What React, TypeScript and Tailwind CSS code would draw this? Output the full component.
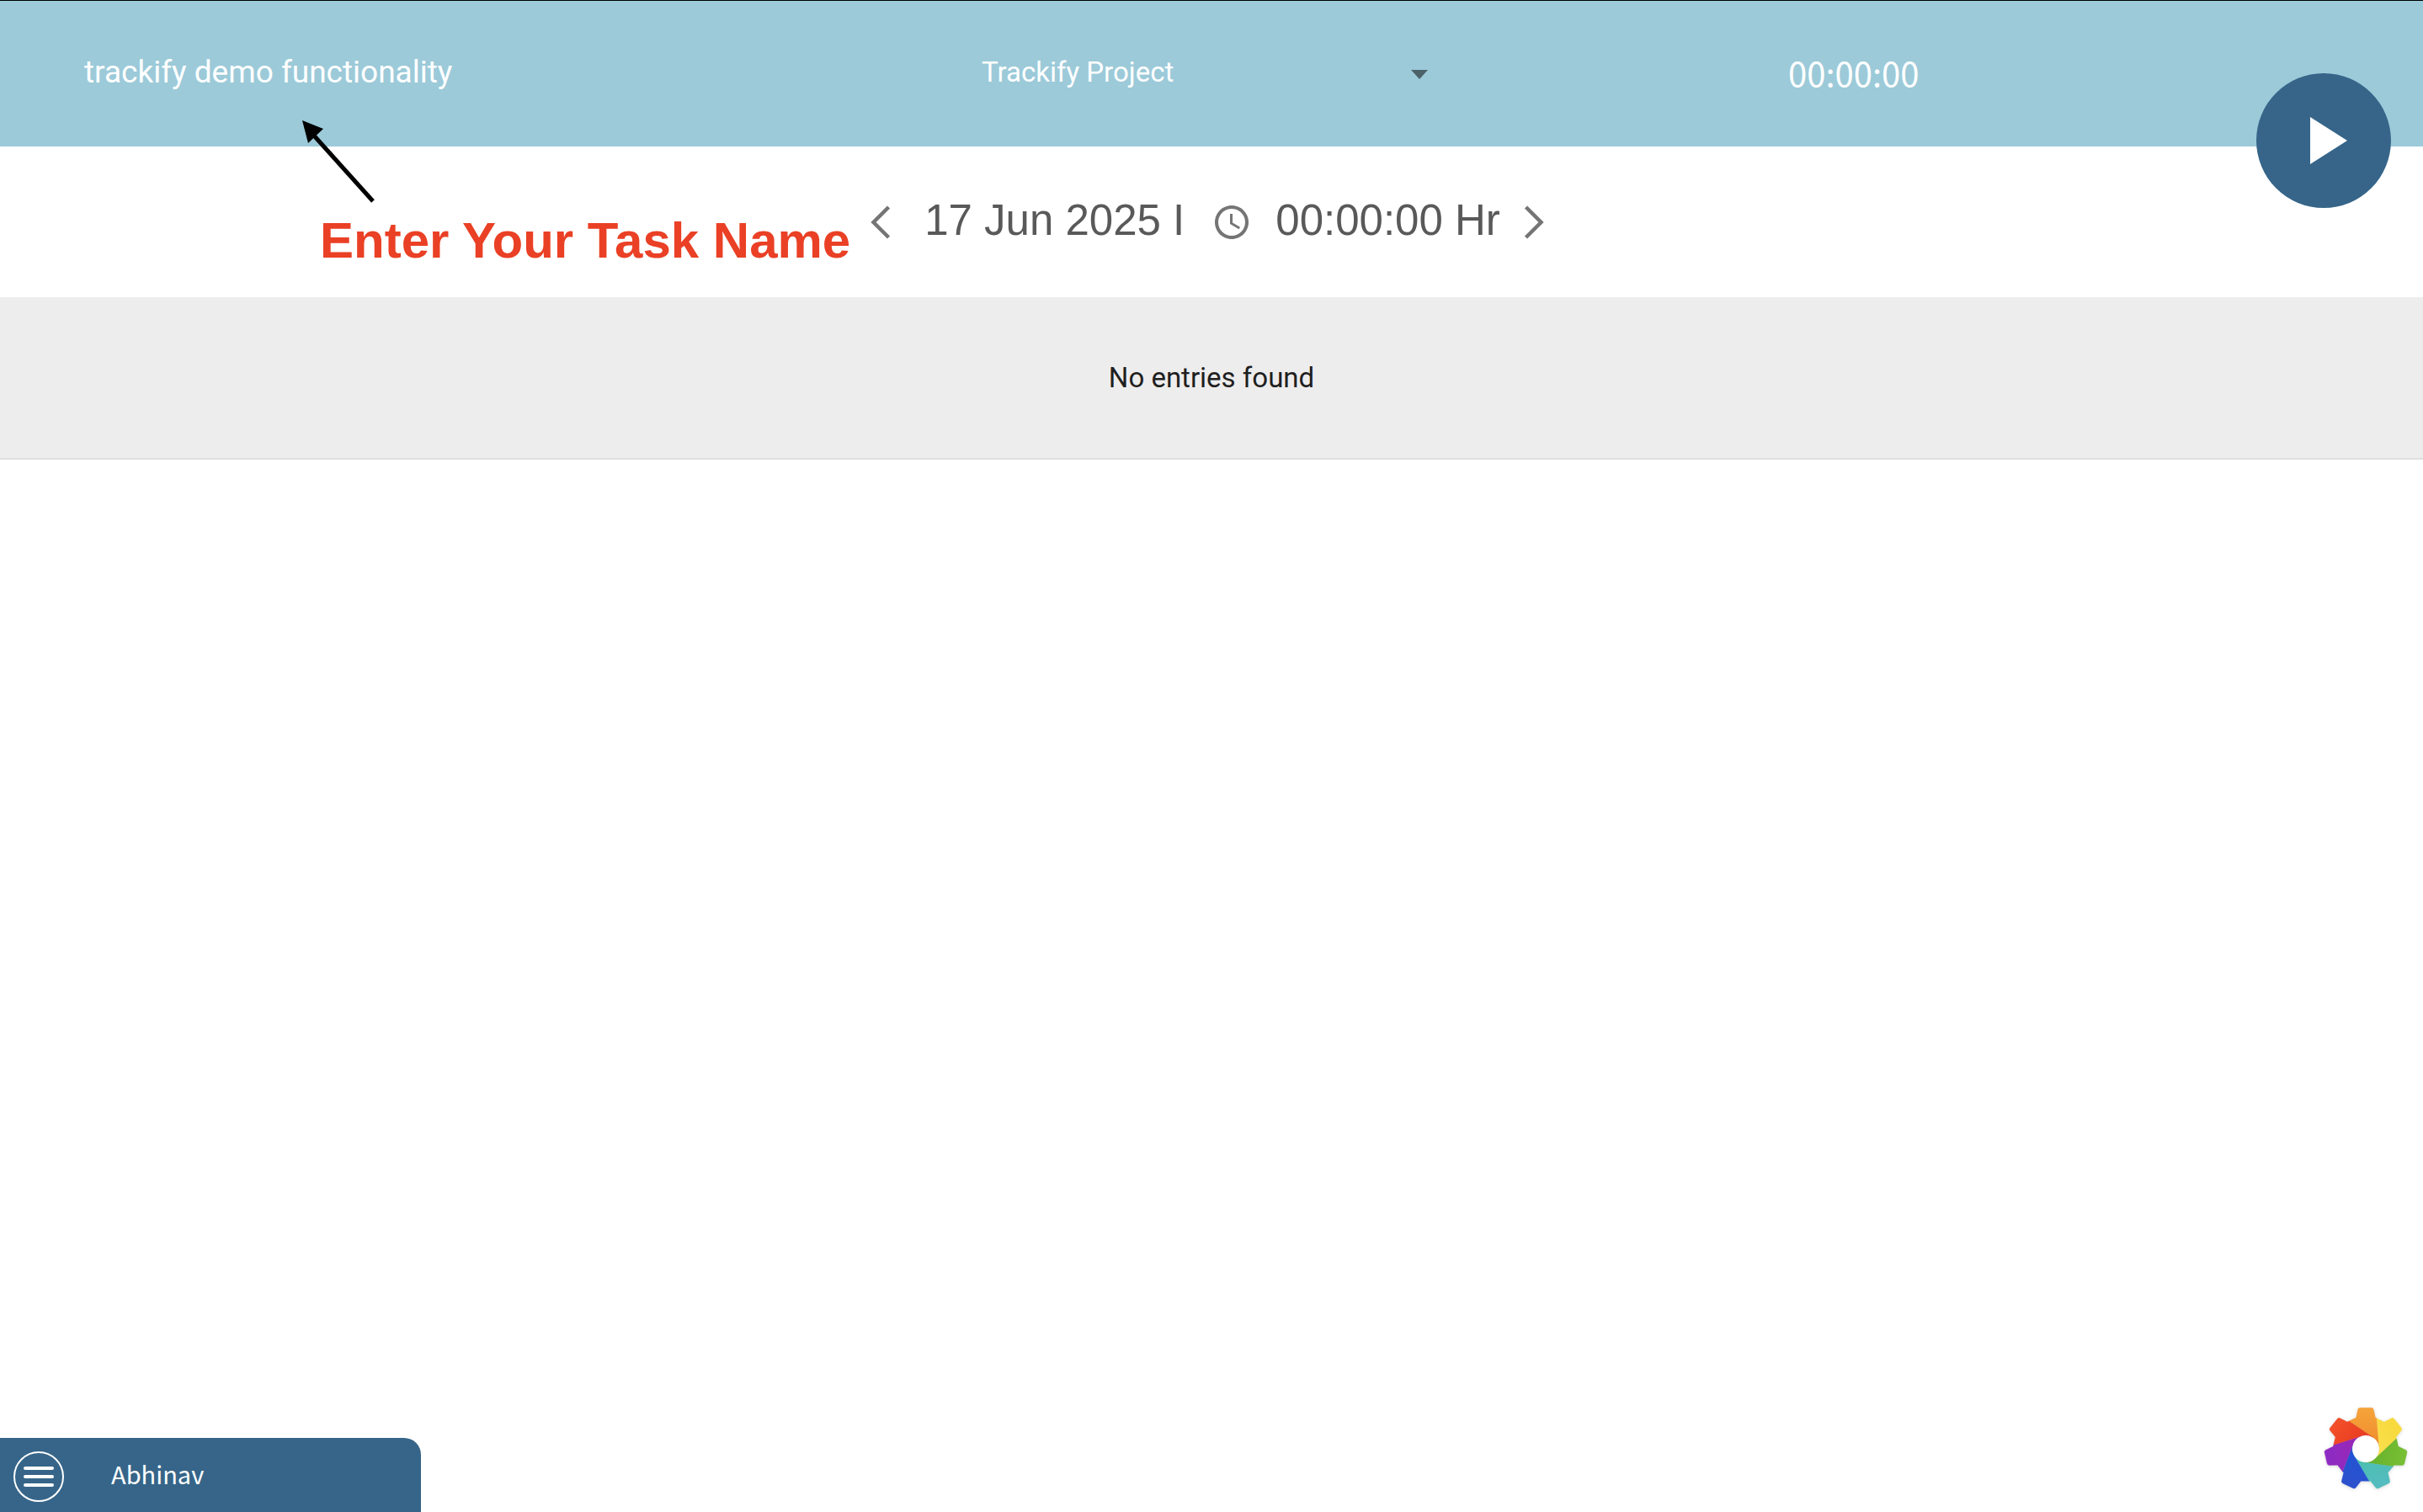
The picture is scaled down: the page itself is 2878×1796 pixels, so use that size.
import React, { useState } from "react";

const BLADE =
  "M-60,-98 L-34,-110 L-28,-138 Q-27,-145 -20,-145 L20,-145 Q27,-145 28,-138 L34,-110 L39.3,-108 L47.9,-3.6 A48,48 0 0 0 27,-39.7 Z";

const BLADES = [
  { angle: 0, from: "#f6a43c", to: "#ee8a2a" },
  { angle: 51.43, from: "#f7d93c", to: "#fbe14f" },
  { angle: 102.86, from: "#78bf33", to: "#64b02c" },
  { angle: 154.29, from: "#55bcc0", to: "#48bfae" },
  { angle: 205.71, from: "#2d50cc", to: "#1f55d6" },
  { angle: 257.14, from: "#8c2bc4", to: "#9c27b4" },
  { angle: 308.57, from: "#f2502a", to: "#e6371f" },
];

function ColorGear() {
  return (
    <svg viewBox="-152 -152 304 304" className="size-[102px] drop-shadow-sm" aria-hidden="true">
      <defs>
        {BLADES.map((b, i) => (
          <linearGradient key={i} id={`blade-${i}`} x1="0" y1="0" x2="0" y2="1">
            <stop offset="0" stopColor={b.from} />
            <stop offset="1" stopColor={b.to} />
          </linearGradient>
        ))}
      </defs>
      {BLADES.map((b, i) => (
        <path
          key={i}
          d={BLADE}
          transform={`rotate(${b.angle})`}
          fill={`url(#blade-${i})`}
          stroke={b.to}
          strokeWidth="1"
        />
      ))}
      <circle r="47" fill="#fff" />
    </svg>
  );
}

function Header() {
  const [task, setTask] = useState("trackify demo functionality");
  return (
    <header className="relative h-[174px] border-t border-black bg-[#9ccad9] text-white">
      <div className="grid h-full grid-cols-[1166fr_958fr_754fr] items-center pb-1">
        <input
          aria-label="Task name"
          value={task}
          onChange={(e) => setTask(e.target.value)}
          className="ml-25 mr-20 h-20 bg-transparent text-[37px] outline-none"
        />
        <div className="relative flex w-[530px] items-center">
          <select
            aria-label="Project"
            className="h-20 w-full appearance-none bg-transparent text-[33px] outline-none"
          >
            <option>Trackify Project</option>
          </select>
          <svg
            viewBox="0 0 20 10"
            className="pointer-events-none absolute right-0 mt-4 h-3 w-5 self-start translate-y-5"
            aria-hidden="true"
          >
            <path d="M0 0h20L10 11z" fill="#4c6269" />
          </svg>
        </div>
        <time className="font-['Noto_Sans_CJK_SC',sans-serif] text-[40px] leading-none">00:00:00</time>
      </div>
      <button
        aria-label="Start timer"
        className="absolute right-[38px] top-[86px] flex size-40 items-center justify-center rounded-full bg-[#366589]"
      >
        <svg viewBox="0 0 44 56" className="ml-3 h-14 w-11" aria-hidden="true">
          <path d="M0 0L44 28L0 56z" fill="#fff" />
        </svg>
      </button>
    </header>
  );
}

function DateBar() {
  return (
    <nav
      aria-label="Day"
      className="flex h-[179px] items-start justify-center pr-2.5 pt-[70px] font-['Liberation_Sans',Arial,sans-serif] text-[51px] leading-[39px] text-[#595959]"
    >
      <button aria-label="Previous day" className="mr-10">
        <svg viewBox="0 0 24 40" className="h-10 w-6" fill="none" stroke="#757575" strokeWidth="4.5" aria-hidden="true">
          <path d="M21.5 2L3.5 20L21.5 38" />
        </svg>
      </button>
      <span className="-mt-0.5">17 Jun 2025 I</span>
      <svg viewBox="2 2 20 20" className="ml-9 mr-8 size-10" fill="#757575" aria-hidden="true">
        <path d="M11.99 2C6.47 2 2 6.48 2 12s4.47 10 9.99 10C17.52 22 22 17.52 22 12S17.52 2 11.99 2zM12 20c-4.42 0-8-3.58-8-8s3.58-8 8-8 8 3.58 8 8-3.58 8-8 8zm.5-13H11v6l5.25 3.15.75-1.23-4.5-2.67z" />
      </svg>
      <span className="-mt-0.5">00:00:00 Hr</span>
      <button aria-label="Next day" className="ml-7">
        <svg viewBox="0 0 24 40" className="h-10 w-6" fill="none" stroke="#757575" strokeWidth="4.5" aria-hidden="true">
          <path d="M2.5 2L20.5 20L2.5 38" />
        </svg>
      </button>
    </nav>
  );
}

function TaskHint() {
  return (
    <aside className="pointer-events-none absolute left-[356px] top-[140px]">
      <svg viewBox="0 0 92 104" className="h-[104px] w-[92px]" aria-hidden="true">
        <path d="M16 20L87 99" stroke="#000" strokeWidth="5" />
        <path d="M3 3L28 13L10 30z" fill="#000" />
      </svg>
      <p className="ml-6 whitespace-nowrap font-['Liberation_Sans',Arial,sans-serif] text-[60px] font-bold leading-[84px] text-[#ea4025]">
        Enter Your Task Name
      </p>
    </aside>
  );
}

export default function App() {
  return (
    <div className="relative flex min-h-screen flex-col bg-white font-['Roboto',sans-serif]">
      <Header />
      <DateBar />
      <main className="flex h-[193px] items-center justify-center border-b-2 border-[#dfdfdf] bg-[#ededed] text-[33px] text-[#1f1f1f]">
        No entries found
      </main>
      <footer className="mt-auto flex items-end justify-between">
        <div className="flex h-[88px] w-[500px] items-center rounded-tr-[20px] bg-[#366589] pl-4 text-white">
          <button
            aria-label="Menu"
            className="mt-1 flex size-15 flex-col items-center justify-center gap-1.5 rounded-full border-2 border-white"
          >
            <span className="h-1 w-9 rounded-full bg-white" />
            <span className="h-1 w-9 rounded-full bg-white" />
            <span className="h-1 w-9 rounded-full bg-white" />
          </button>
          <span className="ml-14 pb-1 font-['Noto_Sans_CJK_SC',sans-serif] text-[29px] leading-none">Abhinav</span>
        </div>
        <button aria-label="Settings" className="mb-6 mr-[17px]">
          <ColorGear />
        </button>
      </footer>
      <TaskHint />
    </div>
  );
}
